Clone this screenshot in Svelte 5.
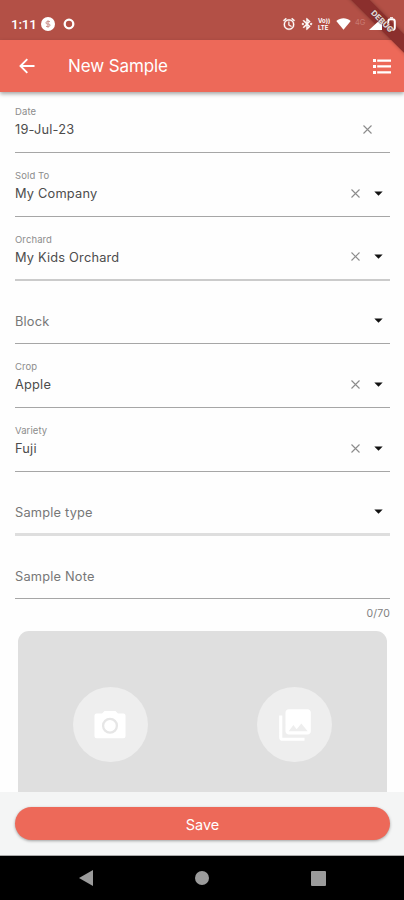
<script lang="ts">
  interface Campo {
    label: string;
    value: string;
    clearable: boolean;
    dropdown: boolean;
    line?: string;
  }

  const fields: Campo[] = [
    { label: 'Date', value: '19-Jul-23', clearable: true, dropdown: false },
    { label: 'Sold To', value: 'My Company', clearable: true, dropdown: true },
    { label: 'Orchard', value: 'My Kids Orchard', clearable: true, dropdown: true, line: 'soft' },
    { label: 'Block', value: '', clearable: false, dropdown: true },
    { label: 'Crop', value: 'Apple', clearable: true, dropdown: true },
    { label: 'Variety', value: 'Fuji', clearable: true, dropdown: true },
    { label: 'Sample type', value: '', clearable: false, dropdown: true, line: 'disabled' },
    { label: 'Sample Note', value: '', clearable: false, dropdown: false },
  ];

  const noteLength = 0;
</script>

<div class="screen">
  <div class="status">
    <span class="status__time">1:11</span>
    <svg class="status__dollar" viewBox="0 0 14 14" width="14" height="14">
      <circle cx="7" cy="7" r="7" fill="#fff" />
      <path d="M9 4.6H6.2a1.2 1.2 0 0 0 0 2.4h1.6a1.2 1.2 0 0 1 0 2.4H5M7 3.2v7.6" fill="none" stroke="#c98d86" stroke-width="1" />
    </svg>
    <svg class="status__ring" viewBox="0 0 12 12" width="12" height="12">
      <circle cx="6" cy="6" r="4.3" fill="none" stroke="#fff" stroke-width="2.3" />
    </svg>

    <div class="status__right">
      <svg class="alarm" viewBox="0 0 24 24" width="14" height="14" fill="#fff" stroke="#fff" stroke-width=".6">
        <path d="M22 5.72l-4.6-3.86-1.29 1.53 4.6 3.86L22 5.72zM7.88 3.39L6.6 1.86 2 5.71l1.29 1.53 4.59-3.85zM12.5 8H11v6l4.75 2.85.75-1.23-4-2.37V8zM12 4a9 9 0 1 0 0 18 9 9 0 0 0 0-18zm0 16a7 7 0 1 1 0-14 7 7 0 0 1 0 14z" />
      </svg>
      <svg class="bluetooth" viewBox="0 0 24 24" width="14" height="14" fill="#fff" stroke="#fff" stroke-width=".7">
        <path d="M7 12l-2-2-2 2 2 2 2-2zm10.71-4.29L12 2h-1v7.59L6.41 5 5 6.41 10.59 12 5 17.59 6.41 19 11 14.41V22h1l5.71-5.71-4.3-4.29 4.3-4.29zM13 5.83l1.88 1.88L13 9.59V5.83zm1.88 10.46L13 18.17v-3.76l1.88 1.88zM19 10l-2 2 2 2 2-2-2-2z" />
      </svg>
      <div class="volte">
        <span>Vo))</span>
        <span>LTE</span>
      </div>
      <svg class="wifi" viewBox="0 0 15 12" width="15" height="12">
        <path d="M.3 2.9C4.5-.7 10.5-.7 14.7 2.9L7.5 11.8z" fill="#fff" />
      </svg>
      <span class="network">4G</span>
      <svg class="signal" viewBox="0 0 13 12" width="13" height="12">
        <path d="M13 0v12H0z" fill="#fff" />
      </svg>
      <svg class="battery" viewBox="0 0 9 14" width="9" height="14">
        <rect x="1.2" y="2.2" width="6.6" height="10.6" rx="2.4" fill="none" stroke="#fff" stroke-width="2" />
        <path d="M3 .8h3" stroke="#fff" stroke-width="1.2" />
      </svg>
    </div>
  </div>

  <header class="appbar">
    <svg class="appbar__back" viewBox="0 0 16 16" width="16" height="16">
      <path d="M15.5 8H1.7M8.3 1.2L1.5 8l6.8 6.8" fill="none" stroke="#fff" stroke-width="1.9" />
    </svg>
    <h1>New Sample</h1>
    <svg class="appbar__list" viewBox="0 0 18 15" width="18" height="15" fill="#fff">
      <path d="M0 0h3v3H0zM4.2 .4H18v2.3H4.2zM0 6h3v3H0zM4.2 6.3H18v2.3H4.2zM0 12h3v3H0zM4.2 12.3H18v2.3H4.2z" />
    </svg>
  </header>

  <main class="form">
    {#each fields as field (field.label)}
      <div class={`field ${field.line ?? ''}`}>
        <div class="field__label">{field.value ? field.label : ''}</div>
        <div class="field__row">
          <span class="field__value" class:placeholder={!field.value}>{field.value || field.label}</span>
          {#if field.clearable}
            <svg class="clear" viewBox="0 0 9 9" width="9" height="9">
              <path d="M.5 .5l8 8M8.5 .5l-8 8" stroke="#8c8c8c" stroke-width="1.1" />
            </svg>
          {/if}
          {#if field.dropdown}
            <svg class="arrow" viewBox="0 0 9 5" width="9" height="5">
              <path d="M.3 .5h8.4L4.5 4.7z" fill="#111" />
            </svg>
          {/if}
        </div>
      </div>
    {/each}

    <div class="counter">{noteLength}/70</div>

    <div class="photos">
      <button type="button" class="photos__btn" aria-label="Camera">
        <svg viewBox="0 0 32 29" width="32" height="29">
          <path d="M10.5 1L8 3.6H2.5A2 2 0 0 0 .5 5.6V26.3a2 2 0 0 0 2 2h27a2 2 0 0 0 2-2V5.6a2 2 0 0 0-2-2H24L21.5 1z" fill="#fff" />
          <circle cx="16" cy="15.8" r="6.9" fill="none" stroke="#e6e6e6" stroke-width="2.3" />
        </svg>
      </button>
      <button type="button" class="photos__btn" aria-label="Gallery">
        <svg viewBox="0 0 24 24" width="38" height="38" fill="#fff">
          <path d="M22 16V4c0-1.1-.9-2-2-2H8c-1.1 0-2 .9-2 2v12c0 1.1.9 2 2 2h12c1.1 0 2-.9 2-2zm-11-4l2.03 2.71L16 11l4 5H8l3-4zM2 6v14c0 1.1.9 2 2 2h14v-2H4V6H2z" />
        </svg>
      </button>
    </div>
  </main>

  <footer class="actions">
    <button type="button" class="save">Save</button>
  </footer>

  <nav class="navbar">
    <svg viewBox="0 0 14 16" width="14" height="16"><path d="M14 0v16L0 8z" fill="#9b9b9b" /></svg>
    <svg viewBox="0 0 14 14" width="14" height="14"><circle cx="7" cy="7" r="7" fill="#9b9b9b" /></svg>
    <svg viewBox="0 0 15 15" width="15" height="15"><rect width="15" height="15" rx="1" fill="#9b9b9b" /></svg>
  </nav>

  <div class="ribbon"></div>
  <div class="ribbon ribbon--text">DEBUG</div>
</div>

<style>
  :global(body) {
    margin: 0;
    background: #fff;
  }

  .screen {
    position: relative;
    width: 404px;
    height: 900px;
    overflow: hidden;
    display: flex;
    flex-direction: column;
    background: #fefefe;
    font-family: Inter, Roboto, sans-serif;
  }

  .status {
    flex: none;
    height: 40px;
    box-sizing: border-box;
    padding: 8px 8px 0 11px;
    display: flex;
    align-items: center;
    background: #b35046;
    color: #fff;
  }

  .status__time {
    width: 30px;
    font-family: Roboto, sans-serif;
    font-size: 13.5px;
    font-weight: 500;
    letter-spacing: -0.2px;
  }

  .status__ring {
    margin-left: 8px;
  }

  /* system icons are drawn over the debug ribbon */
  .status__right {
    position: relative;
    z-index: 2;
    margin-left: auto;
    display: flex;
    align-items: center;
  }

  .bluetooth {
    margin-left: 4px;
  }

  .volte {
    width: 15px;
    margin-left: 4px;
    display: flex;
    flex-direction: column;
    font-size: 6px;
    font-weight: 700;
    line-height: 7px;
  }

  .wifi {
    margin-left: 3px;
  }

  .network {
    width: 12px;
    margin: -4px 2px 0 4px;
    font-size: 7.5px;
    color: #c97a72;
  }

  .battery {
    margin-left: 5px;
  }

  .appbar {
    flex: none;
    height: 52px;
    box-sizing: border-box;
    padding: 0 13px 0 19px;
    display: flex;
    align-items: center;
    background: #ed6959;
    color: #fff;
    box-shadow: 0 2px 4px rgba(0, 0, 0, 0.35);
  }

  .appbar h1 {
    flex: 1;
    margin: -1px 0 0 33px;
    font-size: 17px;
    font-weight: 400;
    letter-spacing: -0.1px;
  }

  .form {
    flex: 1;
    min-height: 0;
    overflow: hidden;
    display: flex;
    flex-direction: column;
    margin-top: 4px;
    padding: 0 14px 0 15px;
  }

  .field {
    flex: none;
    height: 63.75px;
    box-sizing: border-box;
    padding-top: 16px;
    border-bottom: 1.5px solid #a6a6a6;
  }

  .field:first-child {
    height: 57px;
    padding-top: 9.2px;
  }

  .field.soft {
    border-bottom: 2px solid #cbcbcb;
  }

  .field.disabled {
    border-bottom: 3px solid #dedede;
  }

  .field__label {
    height: 14px;
    font-size: 9.5px;
    line-height: 14px;
    letter-spacing: 0.1px;
    color: #8c8c8c;
  }

  .field__row {
    height: 20px;
    padding-right: 7px;
    display: flex;
    align-items: center;
  }

  .field:first-child .field__row {
    padding-right: 18px;
  }

  .field__value {
    flex: 1;
    padding-top: 2px;
    font-size: 12.8px;
    line-height: 20px;
    letter-spacing: 0.2px;
    color: #4c4c4c;
  }

  .field__value.placeholder {
    color: #777;
  }

  .arrow {
    margin-left: 14px;
  }

  .counter {
    flex: none;
    height: 32px;
    line-height: 30px;
    text-align: right;
    font-size: 10.5px;
    letter-spacing: 0.2px;
    color: #808080;
  }

  .photos {
    flex: none;
    height: 187px;
    margin: 0 3px;
    display: flex;
    align-items: center;
    justify-content: space-around;
    border-radius: 11px;
    background: #dfdfdf;
  }

  .photos__btn {
    width: 75px;
    height: 75px;
    padding: 0;
    display: flex;
    align-items: center;
    justify-content: center;
    border: none;
    border-radius: 50%;
    background: #eee;
  }

  .actions {
    flex: none;
    height: 64px;
    box-sizing: border-box;
    padding: 15px 14px 0 15px;
    background: #f4f5f5;
    border-bottom: 1px solid #aaa;
  }

  .save {
    display: block;
    width: 100%;
    height: 33px;
    padding: 0;
    border: none;
    border-radius: 17px;
    background: #ed6959;
    box-shadow: 0 1px 3px rgba(0, 0, 0, 0.35);
    color: #fff;
    font-family: inherit;
    font-size: 14.5px;
    line-height: 35px;
  }

  .navbar {
    flex: none;
    height: 44px;
    box-sizing: border-box;
    padding: 0 78px 0 79px;
    display: flex;
    align-items: center;
    justify-content: space-between;
    background: #000;
  }

  .ribbon {
    position: absolute;
    top: 15px;
    left: 332px;
    width: 100px;
    height: 13px;
    transform: rotate(45deg);
    background: #8b2f2d;
    box-shadow: 0 0 4px rgba(0, 0, 0, 0.3);
  }

  .ribbon--text {
    z-index: 3;
    background: none;
    box-shadow: none;
    color: #e3d3d1;
    text-align: center;
    text-shadow: 0 0 1px #5a2a28, 0 0 1px #5a2a28;
    font-size: 8px;
    font-weight: 800;
    line-height: 13px;
  }
</style>
